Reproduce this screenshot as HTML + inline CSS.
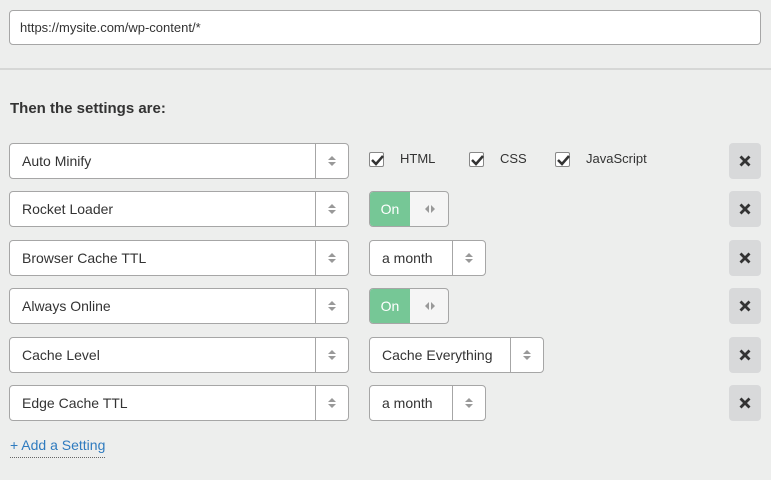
<!DOCTYPE html><html><head><style>
body{margin:0;width:771px;height:480px;background:#edeeed;font-family:"Liberation Sans",sans-serif;font-size:14px;color:#333;position:relative;overflow:hidden}
.a{position:absolute;box-sizing:border-box}
.inp{left:9px;top:10px;width:752px;height:35px;background:#fff;border:1px solid #a6a6a6;border-radius:4px;padding:9px 10px;font-size:13px}
.sep{left:0;top:68px;width:771px;height:2px;background:#d6d7d6}
.sel{background:#fff;border:1px solid #a6a6a6;border-radius:4px;height:36px;padding:9px 12px;font-size:14px}
.sel .d{position:absolute;right:0;top:0;bottom:0;border-left:1px solid #a6a6a6;width:32px}
.arr{position:absolute;left:50%;top:50%;margin-left:-4px;width:8px;height:12px;margin-top:-6px}
.tg{background:#f5f5f5;border:1px solid #a6a6a6;border-radius:4px;height:36px;width:80px}
.tg .on{position:absolute;left:0;top:0;bottom:0;width:40px;background:#76c796;color:#fff;text-align:center;line-height:34px;border-radius:3px 0 0 3px}
.x{left:729px;width:32px;height:36px;background:#d8d9da;border-radius:4px}
.cb{width:15px;height:15px;background:#fff;border:1px solid #888;border-radius:2px}
.xi{position:absolute;left:9px;top:11px}
</style></head><body>
<div class="a inp">https://mysite.com/wp-content/*</div>
<div class="a sep"></div>
<div class="a" style="left:10px;top:100px;font-weight:bold;font-size:15px">Then the settings are:</div>

<svg width="0" height="0" style="position:absolute"><defs>
<symbol id="ud" viewBox="0 0 8 12"><path d="M0 5L4 1L8 5Z M0 7L4 11L8 7Z" fill="#999"/></symbol>
<symbol id="lr" viewBox="0 0 12 8"><path d="M5 0L1 4L5 8Z M7 0L11 4L7 8Z" fill="#999"/></symbol>
<symbol id="xx" viewBox="0 0 14 14"><path d="M2.5 2.5L11.5 11.5M11.5 2.5L2.5 11.5" stroke="#333" stroke-width="2.8"/></symbol>
<symbol id="ck" viewBox="0 0 15 15"><path d="M2 7L6 11L13 3" stroke="#333" stroke-width="2.5" fill="none"/></symbol>
</defs></svg>

<div class="a sel" style="left:9px;top:143px;width:340px">Auto Minify<div class="d"><svg class="arr"><use href="#ud"/></svg></div></div>
<div class="a cb" style="left:369px;top:152px"><svg width="15" height="15"><use href="#ck"/></svg></div>
<div class="a" style="left:400px;top:151px;font-size:13px">HTML</div>
<div class="a cb" style="left:469px;top:152px"><svg width="15" height="15"><use href="#ck"/></svg></div>
<div class="a" style="left:500px;top:151px;font-size:13px">CSS</div>
<div class="a cb" style="left:555px;top:152px"><svg width="15" height="15"><use href="#ck"/></svg></div>
<div class="a" style="left:586px;top:151px;font-size:13px">JavaScript</div>
<div class="a x" style="top:143px"><svg class="xi" width="14" height="14"><use href="#xx"/></svg></div>

<div class="a sel" style="left:9px;top:191px;width:340px">Rocket Loader<div class="d"><svg class="arr"><use href="#ud"/></svg></div></div>
<div class="a tg" style="left:369px;top:191px"><div class="on">On</div><svg style="position:absolute;left:54px;top:13px" width="12" height="8"><use href="#lr"/></svg></div>
<div class="a x" style="top:191px"><svg class="xi" width="14" height="14"><use href="#xx"/></svg></div>

<div class="a sel" style="left:9px;top:240px;width:340px">Browser Cache TTL<div class="d"><svg class="arr"><use href="#ud"/></svg></div></div>
<div class="a sel" style="left:369px;top:240px;width:117px">a month<div class="d"><svg class="arr"><use href="#ud"/></svg></div></div>
<div class="a x" style="top:240px"><svg class="xi" width="14" height="14"><use href="#xx"/></svg></div>

<div class="a sel" style="left:9px;top:288px;width:340px">Always Online<div class="d"><svg class="arr"><use href="#ud"/></svg></div></div>
<div class="a tg" style="left:369px;top:288px"><div class="on">On</div><svg style="position:absolute;left:54px;top:13px" width="12" height="8"><use href="#lr"/></svg></div>
<div class="a x" style="top:288px"><svg class="xi" width="14" height="14"><use href="#xx"/></svg></div>

<div class="a sel" style="left:9px;top:337px;width:340px">Cache Level<div class="d"><svg class="arr"><use href="#ud"/></svg></div></div>
<div class="a sel" style="left:369px;top:337px;width:175px">Cache Everything<div class="d"><svg class="arr"><use href="#ud"/></svg></div></div>
<div class="a x" style="top:337px"><svg class="xi" width="14" height="14"><use href="#xx"/></svg></div>

<div class="a sel" style="left:9px;top:385px;width:340px">Edge Cache TTL<div class="d"><svg class="arr"><use href="#ud"/></svg></div></div>
<div class="a sel" style="left:369px;top:385px;width:117px">a month<div class="d"><svg class="arr"><use href="#ud"/></svg></div></div>
<div class="a x" style="top:385px"><svg class="xi" width="14" height="14"><use href="#xx"/></svg></div>

<div class="a" style="left:10px;top:437px;color:#2f7bbf;border-bottom:1px dotted #666;padding-bottom:4px">+ Add a Setting</div>
</body></html>
